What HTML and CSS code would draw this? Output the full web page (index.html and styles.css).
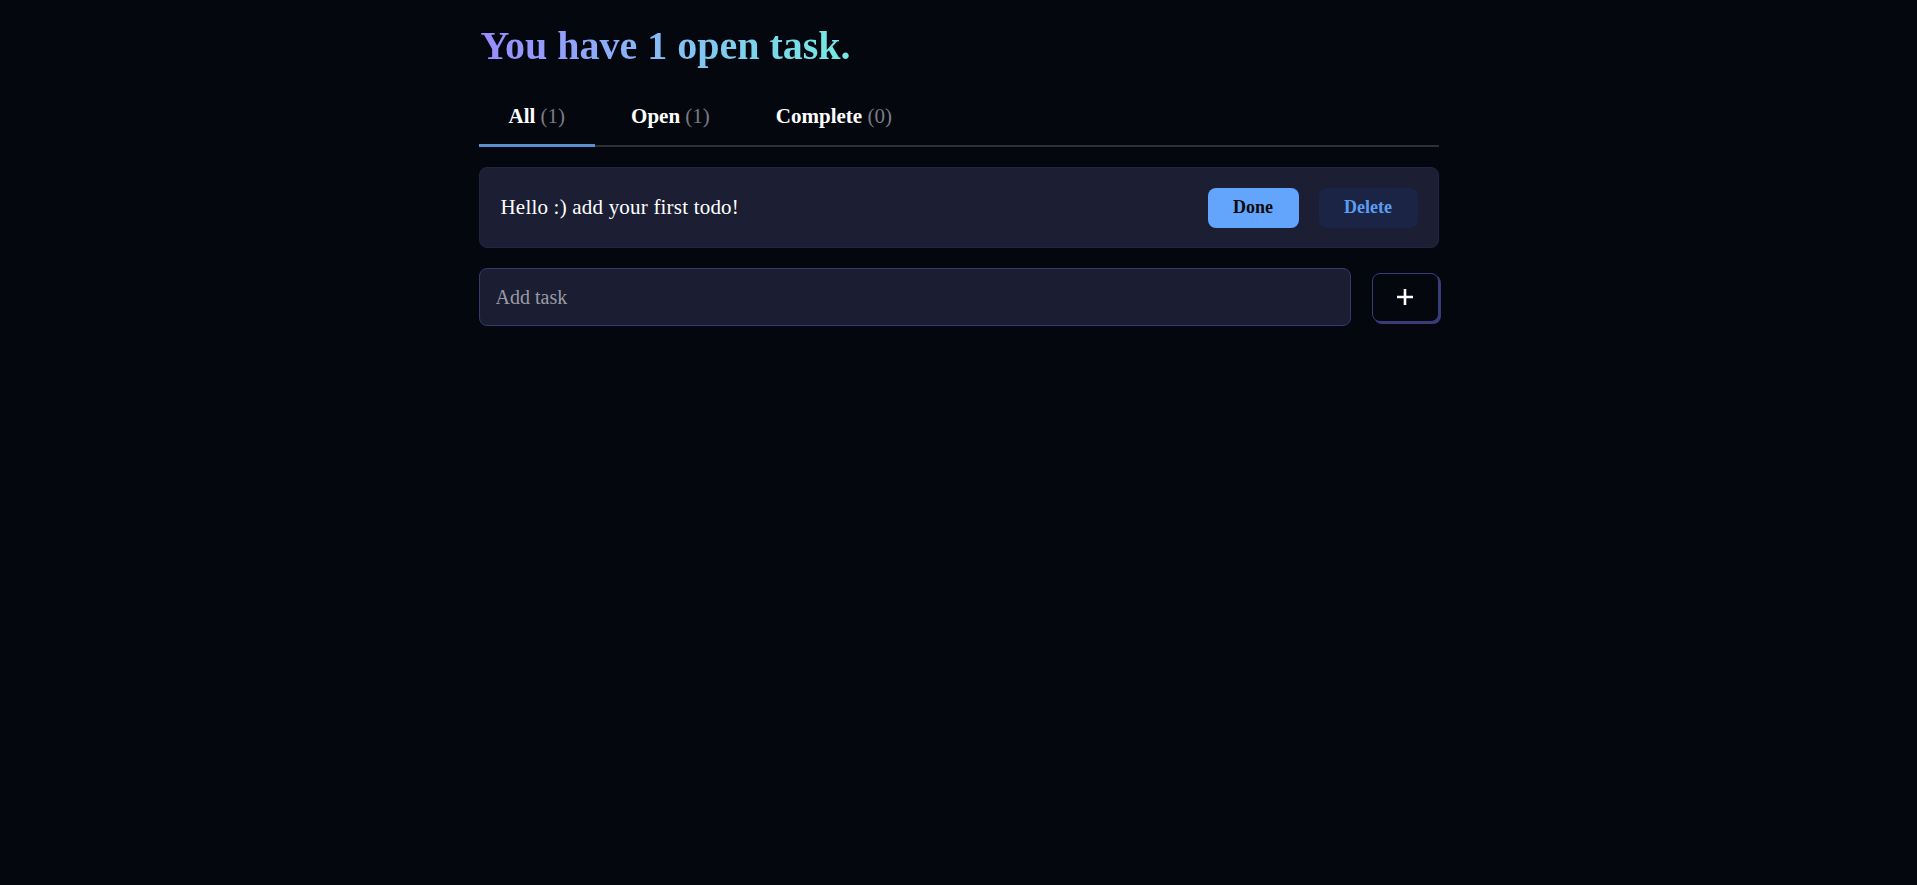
FILE: index.html
```html
<!DOCTYPE html>
<html lang="en">
<head>
<meta charset="utf-8">
<title>Todo</title>
<link rel="stylesheet" href="styles.css">
</head>
<body>
<main class="app">
  <h1 class="title">You have 1 open task.</h1>
  <nav class="tabs">
    <button class="tab active"><b>All</b> <span class="count">(1)</span></button>
    <button class="tab"><b>Open</b> <span class="count">(1)</span></button>
    <button class="tab"><b>Complete</b> <span class="count">(0)</span></button>
  </nav>
  <ul class="list">
    <li class="item">
      <span class="item-text">Hello :) add your first todo!</span>
      <div class="actions">
        <button class="btn btn-done">Done</button>
        <button class="btn btn-delete">Delete</button>
      </div>
    </li>
  </ul>
  <form class="add">
    <input class="add-input" type="text" placeholder="Add task">
    <button class="add-btn" type="button" aria-label="Add">
      <svg width="18" height="18" viewBox="0 0 18 18"><path d="M9 1v16M1 9h16" stroke="#fff" stroke-width="2.6" fill="none"/></svg>
    </button>
  </form>
</main>
</body>
</html>
```

FILE: styles.css
```css
* { box-sizing: border-box; }
html, body {
  margin: 0;
  background: #05070f;
  font-family: "Liberation Serif", "DejaVu Serif", serif;
  color: #ffffff;
}
.app {
  width: 960px;
  margin: 0 auto;
  padding-top: 20px;
}
.title {
  margin: 0 0 0 2px;
  font-size: 40px;
  line-height: 52px;
  font-weight: 700;
  display: inline-block;
  background: linear-gradient(90deg, #9a8bff 0%, #88b8f6 45%, #74ece2 100%);
  -webkit-background-clip: text;
  background-clip: text;
  color: transparent;
}
.tabs {
  display: flex;
  gap: 6px;
  margin-top: 22px;
  border-bottom: 2px solid #2e3038;
}
.tab {
  background: none;
  border: none;
  padding: 0 30px 5px;
  height: 53px;
  margin-bottom: -2px;
  font-family: inherit;
  font-size: 21px;
  color: #ffffff;
  cursor: pointer;
  border-bottom: 3px solid transparent;
}
.tab b { font-weight: 700; }
.tab.active { border-bottom-color: #5b8fd6; }
.count { color: #7b7d85; font-weight: 400; }
.list {
  list-style: none;
  margin: 20px 0 0;
  padding: 0;
}
.item {
  display: flex;
  align-items: center;
  justify-content: space-between;
  height: 81px;
  padding: 0 20px 0 21px;
  background: #1c1f33;
  border: 1px solid #1f2642;
  border-radius: 8px;
}
.item-text {
  font-size: 21px;
  letter-spacing: 0.2px;
}
.actions {
  display: flex;
  gap: 20px;
}
.btn {
  height: 40px;
  border: none;
  border-radius: 8px;
  font-family: inherit;
  font-weight: 700;
  font-size: 18px;
  cursor: pointer;
}
.btn-done {
  width: 91px;
  background: #63a4fd;
  color: #0a0a0a;
}
.btn-delete {
  width: 99px;
  background: #1b2445;
  color: #5c9df2;
}
.add {
  display: flex;
  align-items: center;
  gap: 21px;
  margin-top: 20px;
}
.add-input {
  flex: 1;
  height: 58px;
  padding: 0 16px;
  background: #1b1e32;
  border: 1px solid #343a6e;
  border-radius: 8px;
  color: #ffffff;
  font-family: inherit;
  font-size: 20px;
  outline: none;
}
.add-input::placeholder { color: #9a9aa6; }
.add-btn {
  width: 67px;
  height: 49px;
  display: flex;
  align-items: center;
  justify-content: center;
  background: #05070f;
  border: 1px solid #383d78;
  border-radius: 8px;
  box-shadow: 2px 2px 0 #383d78;
  cursor: pointer;
}
```
